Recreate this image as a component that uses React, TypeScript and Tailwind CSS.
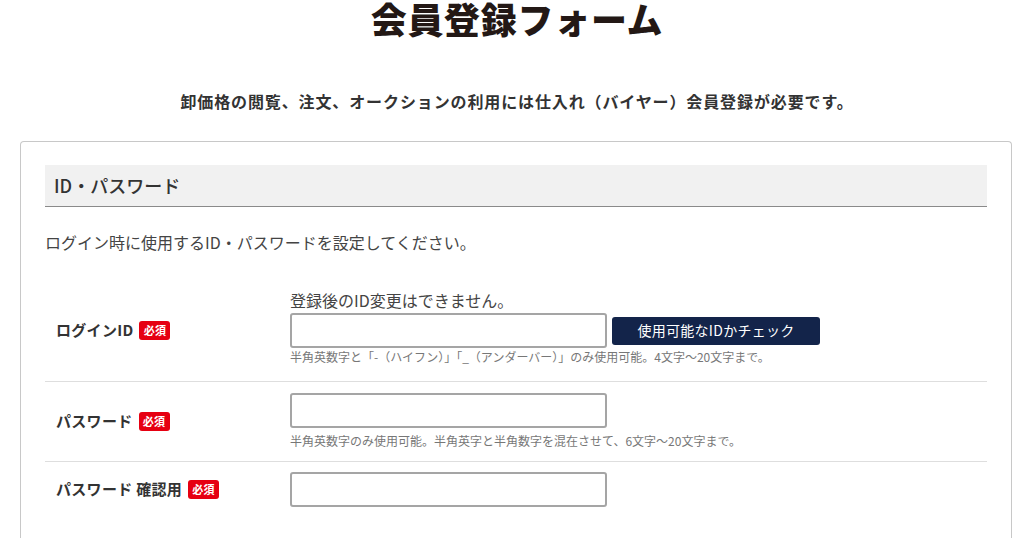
import React from "react";

const font = { fontFamily: '"Noto Sans CJK JP", "Noto Sans", sans-serif' };

function Badge() {
  return (
    <span className="ml-[6px] inline-flex h-[19px] w-[31px] items-center justify-center rounded-[3px] bg-[#e60012] text-[11px] font-bold leading-none text-white">
      必須
    </span>
  );
}

function TextInput() {
  return (
    <input
      type="text"
      className="box-border h-[35px] w-[317px] rounded-[3px] border-2 border-[#a5a5a5] bg-white px-2 text-[15px] outline-none"
    />
  );
}

interface RowProps {
  label: string;
  pad: string;
  last?: boolean;
  children: React.ReactNode;
}

function Row({ label, pad, last, children }: RowProps) {
  return (
    <div
      className={
        "grid grid-cols-[245px_1fr] items-center " +
        (last ? "" : "border-b border-[#dedede]")
      }
    >
      <div className="flex items-center pl-[11px] text-[15px] font-bold tracking-[0.02em] text-[#333]">
        {label}
        <Badge />
      </div>
      <div className={pad}>{children}</div>
    </div>
  );
}

export default function App() {
  return (
    <div className="h-[538px] w-[1024px] overflow-hidden bg-white text-[#333]" style={font}>
      {/* Title */}
      <h1 className="pl-[10px] text-center text-[36px] font-black leading-[36px] tracking-[0.02em] text-[#231815]">
        会員登録フォーム
      </h1>

      <p className="mt-[54px] pl-[10px] text-center text-[16px] font-bold leading-[22px] tracking-[0.055em] text-[#333]">
        卸価格の閲覧、注文、オークションの利用には仕入れ（バイヤー）会員登録が必要です。
      </p>

      {/* Card */}
      <div className="ml-[20px] mr-[12px] mt-[29px] rounded-t-[4px] border border-b-0 border-[#c8c8c8] px-[24px] pt-[23px] pb-[30px]">
        <div className="flex h-[42px] items-center border-b border-[#8a8a8a] bg-[#f1f1f1] pl-[9px] text-[18px] font-medium text-[#333]">
          ID・パスワード
        </div>

        <p className="mt-[24px] text-[16px] leading-[22px] text-[#444]">
          ログイン時に使用するID・パスワードを設定してください。
        </p>

        <div className="mt-[26px]">
          <Row label="ログインID" pad="pt-[11px] pb-[16px]">
            <div className="text-[16px] leading-[20px] text-[#444]">登録後のID変更はできません。</div>
            <div className="mt-[3px] flex items-center">
              <TextInput />
              <button className="ml-[5px] h-[28px] w-[208px] rounded-[3px] bg-[#13244a] text-[14px] tracking-[0.02em] text-white">
                使用可能なIDかチェック
              </button>
            </div>
            <div className="mt-[1px] text-[12px] leading-[16px] text-[#777]">
              半角英数字と「-（ハイフン）」「_（アンダーバー）」のみ使用可能。4文字～20文字まで。
            </div>
          </Row>

          <Row label="パスワード" pad="pt-[11px] pb-[12px]">
            <TextInput />
            <div className="mt-[5px] text-[12px] leading-[16px] text-[#777]">
              半角英数字のみ使用可能。半角英字と半角数字を混在させて、6文字～20文字まで。
            </div>
          </Row>

          <Row label="パスワード 確認用" pad="pt-[10px] pb-[10px]" last>
            <TextInput />
          </Row>
        </div>
      </div>
    </div>
  );
}
